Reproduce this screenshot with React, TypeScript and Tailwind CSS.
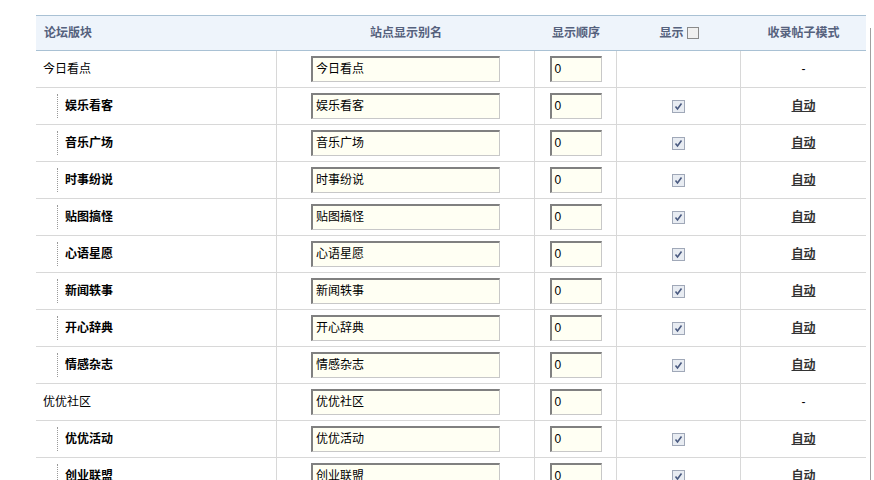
import React from "react";

const rows: [string, boolean][] = [
  ["今日看点", false],
  ["娱乐看客", true],
  ["音乐广场", true],
  ["时事纷说", true],
  ["贴图搞怪", true],
  ["心语星愿", true],
  ["新闻轶事", true],
  ["开心辞典", true],
  ["情感杂志", true],
  ["优优社区", false],
  ["优优活动", true],
  ["创业联盟", true],
];

const inputCls =
  "h-[26px] bg-[#fffff3] border border-[#c8c8c8] border-t-2 border-l-2 border-t-[#808080] border-l-[#808080] text-[12px] px-[3px] leading-[22px] text-black";

function Check() {
  return (
    <span className="inline-flex w-[13px] h-[13px] border border-[#a0a8b8] bg-[#e8ecf2] items-center justify-center">
      <svg width="9" height="9" viewBox="0 0 9 9">
        <path d="M1.5 4.5 L3.5 7 L7.5 1.5" stroke="#4a5a80" strokeWidth="1.6" fill="none" />
      </svg>
    </span>
  );
}

export default function App() {
  return (
    <div className="relative w-[874px] h-[480px] overflow-hidden bg-white pt-[15px] pl-[36px]" style={{ fontFamily: '"Liberation Sans","Noto Sans CJK SC",sans-serif' }}>
      <div className="absolute right-[3px] top-[28px] bottom-0 w-px bg-[#a0a0a0]" />
      <div className="w-[830px] border-t border-[#a9c1d4]">
        <div className="flex h-[35px] bg-[#eef4fb] border-b border-[#a9c1d4] text-[12px] font-bold text-[#55617d] items-center">
          <div className="w-[241px] pl-[8px]">论坛版块</div>
          <div className="w-[258px] text-center">站点显示别名</div>
          <div className="w-[82px] text-center">显示顺序</div>
          <div className="w-[124px] flex justify-center items-center gap-[3px]">显示<span className="w-[12px] h-[12px] border border-[#8a8a8a] bg-[#f0f0f0]" /></div>
          <div className="w-[125px] text-center">收录帖子模式</div>
        </div>
        {rows.map(([name, sub]) => (
          <div key={name} className="flex h-[37px] border-b border-[#d8d8d8] text-[12px] text-black items-center">
            <div className="w-[241px] h-full border-r border-[#d8d8d8] flex items-center">
              {sub ? (
                <div className="ml-[21px] pl-[7px] border-l border-dotted border-[#999] h-[24px] flex items-center font-bold">{name}</div>
              ) : (
                <div className="pl-[7px]">{name}</div>
              )}
            </div>
            <div className="w-[258px] h-full border-r border-[#d8d8d8] flex items-center justify-center">
              <div className={`${inputCls} w-[189px]`}>{name}</div>
            </div>
            <div className="w-[82px] h-full border-r border-[#d8d8d8] flex items-center justify-center">
              <div className={`${inputCls} w-[52px]`}>0</div>
            </div>
            <div className="w-[124px] h-full border-r border-[#d8d8d8] flex items-center justify-center">
              {sub && <Check />}
            </div>
            <div className="w-[125px] h-full flex items-center justify-center">
              {sub ? <span className="font-bold underline text-[#333]">自动</span> : <span>-</span>}
            </div>
          </div>
        ))}
      </div>
    </div>
  );
}
